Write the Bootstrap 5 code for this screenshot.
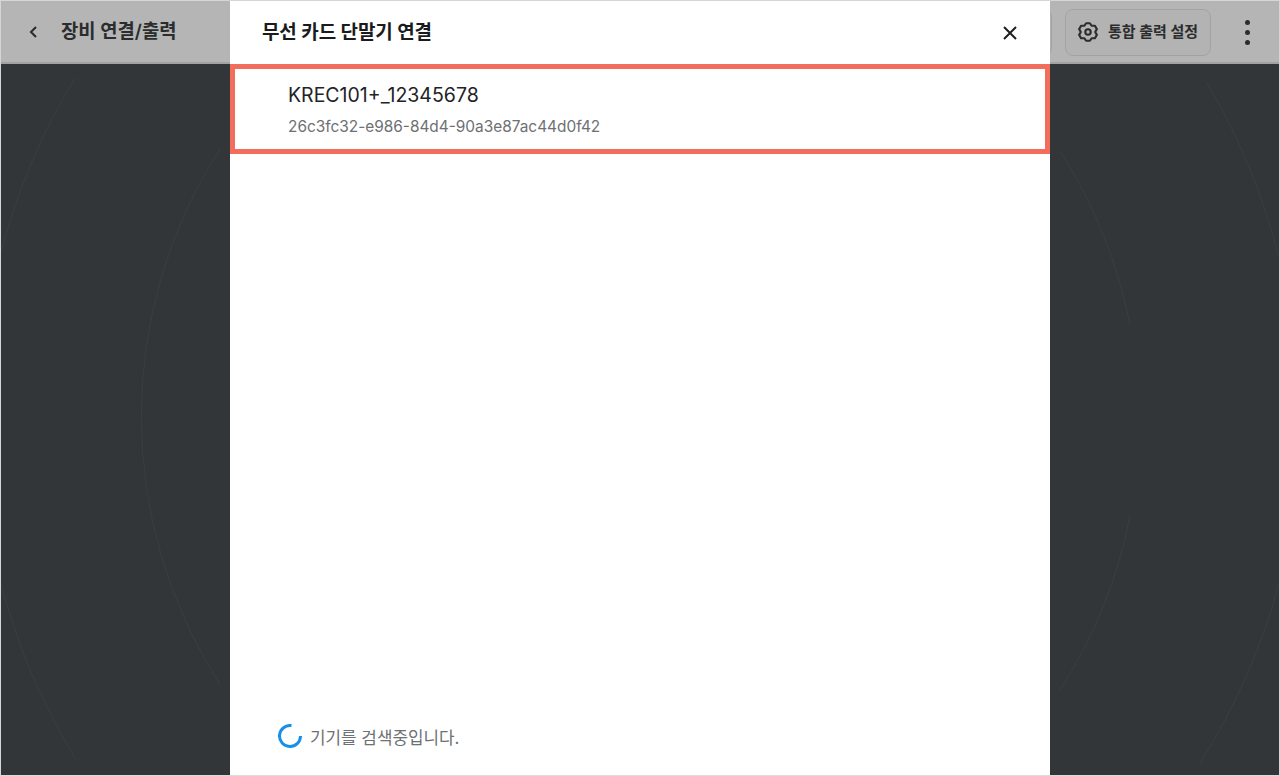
<!DOCTYPE html>
<html lang="ko">
<head>
<meta charset="utf-8">
<title>무선 카드 단말기 연결</title>
<link href="https://cdn.jsdelivr.net/npm/bootstrap@5.3.0/dist/css/bootstrap.min.css" rel="stylesheet">
<style>
html,body{height:100%;overflow:hidden}
body{font-family:Inter,"Noto Sans CJK KR",sans-serif;background:#333639;color:#191b1d}
.page-frame{height:776px;position:relative;border:1px solid #d6d6d6;border-bottom-color:#dcdcdc;overflow:hidden;background:#333639}
.app-top{height:63px;background:#b5b5b5;border-bottom:2px solid #a2a2a2;padding:1px 22px 0 22px;color:#2a2c2e}
.app-title{font-size:18.8px;font-weight:600;margin-left:18px;padding-top:1px}
.ghost-btn{height:47px;border:1px solid #a3a3a3;border-radius:8px;background:#b3b3b3;font-size:15px;font-weight:600;color:#2a2c2e;padding:0 12px;width:146px;letter-spacing:-.05px;white-space:nowrap}
.ghost-prev{width:60px;margin-right:13px}
.gear-gap{gap:10px}
.more-btn{margin-left:26px;width:20px;gap:5px}
.dot-a{width:5px;height:5px;background:#2a2c2e}
.arcs{position:absolute;left:-1px;top:-1px;width:1280px;height:776px}
.arcs path{fill:none;stroke:#3a3e41;stroke-width:1}
.drawer{position:absolute;left:229px;top:-1px;width:820px;height:776px;background:#fff}
.drawer-head{height:64px;padding:2px 32px 0 32px}
.drawer-title{font-size:19px;font-weight:600;letter-spacing:-.15px;margin:0}
.device-row{height:90px;border:5px solid #f36d5c;width:820px;padding:1px 0 0 53px}
.device-name{font-size:19.5px;line-height:24px;color:#212325}
.device-id{font-size:15.4px;line-height:20px;color:#6e7073;margin-top:10px}
.scan-line{margin-top:auto;padding:0 0 25px 48px;font-size:16.9px;color:#6e7073}
.scan-text{padding-top:4px}
.drawer-body{height:712px}
</style>
</head>
<body>
<div class="page-frame">
  <svg class="arcs" viewBox="0 0 1280 776" aria-hidden="true">
    <path d="M75 78A660 660 0 0 0 0 256"/>
    <path d="M0 580A660 660 0 0 0 75 758"/>
    <path d="M220 149A494 494 0 0 0 220 684"/>
    <path d="M1207 83A660 660 0 0 1 1280 261"/>
    <path d="M1280 580A660 660 0 0 1 1200 763"/>
    <path d="M1060 151A499 499 0 0 1 1130 325"/>
    <path d="M1130 516A499 499 0 0 1 1060 690"/>
  </svg>
  <header class="app-top d-flex align-items-center position-relative">
    <svg width="20" height="20" viewBox="0 0 20 20" fill="none" stroke="currentColor" stroke-width="2.1" aria-hidden="true"><path d="M13 5 8 10l5 5"/></svg>
    <span class="app-title">장비 연결/출력</span>
    <div class="ms-auto d-flex align-items-center">
      <button type="button" class="ghost-btn ghost-prev"></button>
      <button type="button" class="ghost-btn d-flex align-items-center gear-gap">
        <svg width="20" height="20" viewBox="0 0 20 20" fill="none" stroke="currentColor" stroke-width="2.1" stroke-linejoin="round" aria-hidden="true"><path d="M8.07 1.2h3.86l1.67 2.56 3.31.02 1.93 3.35-1.64 2.87 1.64 2.87-1.93 3.35-3.31.02-1.67 2.56H8.07L6.4 16.24l-3.31-.02-1.93-3.35L2.8 10 1.16 7.13l1.93-3.35 3.31-.02z"/><circle cx="10" cy="10" r="2.7"/></svg>
        <span>통합 출력 설정</span>
      </button>
      <div class="more-btn d-flex flex-column align-items-center">
        <span class="rounded-circle d-block dot-a"></span><span class="rounded-circle d-block dot-a"></span><span class="rounded-circle d-block dot-a"></span>
      </div>
    </div>
  </header>
  <section class="drawer d-flex flex-column">
    <div class="drawer-head d-flex align-items-center justify-content-between">
      <h1 class="drawer-title">무선 카드 단말기 연결</h1>
      <svg width="16" height="16" viewBox="0 0 16 16" fill="none" stroke="#1c1e20" stroke-width="2" aria-label="닫기"><path d="M2 2l12 12M14 2 2 14"/></svg>
    </div>
    <div class="drawer-body d-flex flex-column">
      <div class="device-row d-flex flex-column justify-content-center">
        <div class="device-name">KREC101+_12345678</div>
        <div class="device-id">26c3fc32-e986-84d4-90a3e87ac44d0f42</div>
      </div>
      <div class="scan-line d-flex align-items-center gap-2">
        <svg width="24" height="24" viewBox="0 0 24 24" fill="none" stroke="#1a8fe8" stroke-width="3" aria-hidden="true"><path d="M22.5 12A10.5 10.5 0 1 1 13.5 1.6"/></svg>
        <span class="scan-text">기기를 검색중입니다.</span>
      </div>
    </div>
  </section>
</div>
<script src="https://cdn.jsdelivr.net/npm/bootstrap@5.3.0/dist/js/bootstrap.bundle.min.js"></script>
</body>
</html>
